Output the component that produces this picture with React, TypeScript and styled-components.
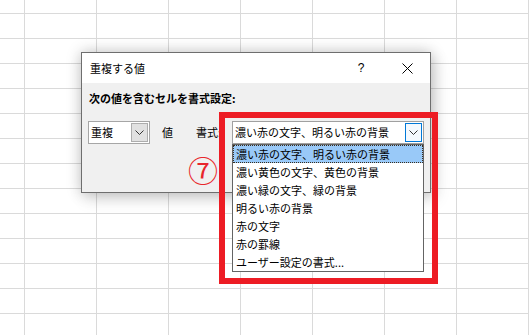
import React from "react";
import styled, { createGlobalStyle } from "styled-components";

const Global = createGlobalStyle`
  html, body { margin: 0; padding: 0; }
  body {
    width: 529px; height: 335px; overflow: hidden; background: #fff;
    font-family: "Noto Sans CJK JP", "Noto Sans", sans-serif;
  }
`;

const Sheet = styled.div`
  position: relative;
  width: 529px;
  height: 335px;
  background-color: #fff;
  background-image:
    linear-gradient(to right, #dadada 1px, transparent 1px),
    linear-gradient(to bottom, #dadada 1px, transparent 1px);
  background-size: 72px 25px;
  background-position: 24px 13px;
  overflow: hidden;
`;

const Dialog = styled.div`
  position: absolute;
  left: 81px;
  top: 52px;
  width: 350px;
  height: 141px;
  box-sizing: border-box;
  border: 1px solid #6e6e6e;
  background: #f0f0f0;
  box-shadow: 0 0 14px rgba(0, 0, 0, 0.22), 4px 6px 16px rgba(0, 0, 0, 0.12);
  display: flex;
  flex-direction: column;
`;

const TitleBar = styled.div`
  height: 30px;
  background: #fff;
  display: flex;
  align-items: center;
  padding: 0 0 0 8px;
  font-size: 11px;
  color: #000;
`;

const Title = styled.span`
  flex: 1;
  line-height: 15px;
  padding-top: 1px;
`;

const TitleButton = styled.div<{ $w: number }>`
  width: ${(p) => p.$w}px;
  height: 30px;
  display: flex;
  align-items: center;
  justify-content: center;
  font-size: 12px;
  font-family: "Liberation Sans", sans-serif;
`;

const Body = styled.div`
  padding: 8px 0 0 6px;
  display: flex;
  flex-direction: column;
  gap: 15px;
`;

const Heading = styled.div`
  font-size: 11px;
  font-weight: bold;
  line-height: 15px;
  padding-left: 1px;
  color: #000;
`;

const Row = styled.div`
  display: flex;
  align-items: center;
  height: 23px;
`;

const Combo = styled.div<{ $w: number; $border: string; $ml?: number }>`
  position: relative;
  width: ${(p) => p.$w}px;
  height: 23px;
  margin-left: ${(p) => p.$ml ?? 0}px;
  box-sizing: border-box;
  border: 1px solid ${(p) => p.$border};
  background: #fff;
  display: flex;
  align-items: center;
  font-size: 11px;
  padding-left: 2px;
`;

const ComboText = styled.span`
  flex: 1;
  line-height: 15px;
  white-space: nowrap;
`;

const DropButton = styled.div<{ $active?: boolean }>`
  width: 17px;
  height: 19px;
  box-sizing: border-box;
  margin-right: 1px;
  border: 1px solid ${(p) => (p.$active ? "#0078d7" : "#adadad")};
  background: ${(p) => (p.$active ? "#f4f9fe" : "#e1e1e1")};
  display: flex;
  align-items: center;
  justify-content: center;
`;

const Label = styled.span<{ $ml: number }>`
  margin-left: ${(p) => p.$ml}px;
  font-size: 11px;
  line-height: 15px;
`;

const List = styled.ul`
  position: absolute;
  left: -1px;
  top: 22px;
  width: 192px;
  margin: 0;
  padding: 0;
  list-style: none;
  box-sizing: border-box;
  border: 1px solid #646464;
  background: #fff;
  z-index: 2;
`;

const Item = styled.li<{ $selected?: boolean }>`
  height: 18px;
  box-sizing: border-box;
  padding-left: 2px;
  font-size: 11px;
  line-height: 17px;
  white-space: nowrap;
  color: #000;
  background: ${(p) => (p.$selected ? "#99c9f8" : "transparent")};
  border: 1px dotted ${(p) => (p.$selected ? "#3a2e1e" : "transparent")};
`;

const RedFrame = styled.div`
  position: absolute;
  left: 219px;
  top: 112px;
  width: 219px;
  height: 172px;
  box-sizing: border-box;
  border: 6px solid #ed1c24;
  z-index: 3;
`;

const StepMark = styled.span`
  position: absolute;
  left: 188px;
  top: 152px;
  font-size: 30px;
  line-height: 34px;
  color: #e8262c;
  font-family: "Noto Sans CJK JP", sans-serif;
  z-index: 3;
`;

const Chevron = () => (
  <svg width="9" height="5" viewBox="0 0 9 5">
    <polyline points="0.5,0.5 4.5,4.5 8.5,0.5" fill="none" stroke="#333" strokeWidth="1" />
  </svg>
);

const items = [
  "濃い赤の文字、明るい赤の背景",
  "濃い黄色の文字、黄色の背景",
  "濃い緑の文字、緑の背景",
  "明るい赤の背景",
  "赤の文字",
  "赤の罫線",
  "ユーザー設定の書式...",
];

export default function App() {
  return (
    <>
      <Global />
      <Sheet>
        <Dialog>
          <TitleBar>
            <Title>重複する値</Title>
            <TitleButton $w={46}>?</TitleButton>
            <TitleButton $w={46}>
              <svg width="11" height="11" viewBox="0 0 11 11">
                <path d="M0.5 0.5 L10.5 10.5 M10.5 0.5 L0.5 10.5" stroke="#000" strokeWidth="1" />
              </svg>
            </TitleButton>
          </TitleBar>
          <Body>
            <Heading>次の値を含むセルを書式設定:</Heading>
            <Row>
              <Combo $w={62} $border="#a6a6a6">
                <ComboText>重複</ComboText>
                <DropButton>
                  <Chevron />
                </DropButton>
              </Combo>
              <Label $ml={12}>値</Label>
              <Label $ml={23}>書式:</Label>
              <Combo $w={192} $border="#a0a0a0" $ml={11}>
                <ComboText>濃い赤の文字、明るい赤の背景</ComboText>
                <DropButton $active>
                  <Chevron />
                </DropButton>
                <List>
                  {items.map((t, i) => (
                    <Item key={t} $selected={i === 0}>
                      {t}
                    </Item>
                  ))}
                </List>
              </Combo>
            </Row>
          </Body>
        </Dialog>
        <RedFrame />
        <StepMark>⑦</StepMark>
      </Sheet>
    </>
  );
}
